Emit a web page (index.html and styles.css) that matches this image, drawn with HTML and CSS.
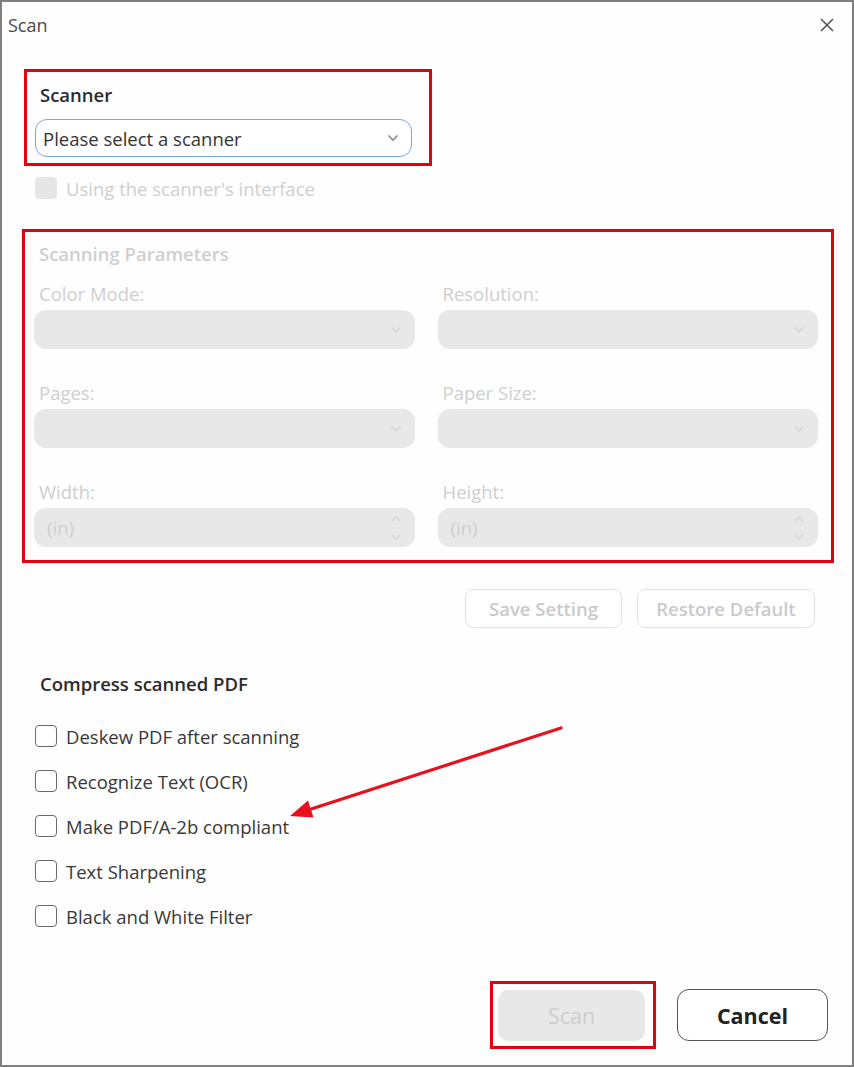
FILE: index.html
```html
<!DOCTYPE html>
<html>
<head>
<meta charset="utf-8">
<link rel="stylesheet" href="styles.css">
</head>
<body>
<div class="window">
  <div class="titlebar">
    <span class="title">Scan</span>
    <svg class="close" width="16" height="16" viewBox="0 0 16 16"><path d="M2 2L14 14M14 2L2 14" stroke="#555" stroke-width="1.6" fill="none"/></svg>
  </div>
  <div class="content">
    <div class="mark scanner-box">
      <div class="label-strong">Scanner</div>
      <div class="select active">
        <span>Please select a scanner</span>
        <svg class="chev" width="12" height="8" viewBox="0 0 12 8"><path d="M1.5 1.5L6 6L10.5 1.5" stroke="#888" stroke-width="1.6" fill="none"/></svg>
      </div>
    </div>
    <div class="check-row disabled">
      <span class="box filled"></span>
      <span>Using the scanner's interface</span>
    </div>
    <div class="mark params-box">
      <div class="section-title">Scanning Parameters</div>
      <div class="param-grid">
        <div class="field">
          <div class="field-label">Color Mode:</div>
          <div class="select off"><span></span><svg class="chev" width="12" height="8" viewBox="0 0 12 8"><path d="M1.5 1.5L6 6L10.5 1.5" stroke="#d4d4d4" stroke-width="1.4" fill="none"/></svg></div>
        </div>
        <div class="field">
          <div class="field-label">Resolution:</div>
          <div class="select off"><span></span><svg class="chev" width="12" height="8" viewBox="0 0 12 8"><path d="M1.5 1.5L6 6L10.5 1.5" stroke="#d4d4d4" stroke-width="1.4" fill="none"/></svg></div>
        </div>
        <div class="field">
          <div class="field-label">Pages:</div>
          <div class="select off"><span></span><svg class="chev" width="12" height="8" viewBox="0 0 12 8"><path d="M1.5 1.5L6 6L10.5 1.5" stroke="#d4d4d4" stroke-width="1.4" fill="none"/></svg></div>
        </div>
        <div class="field">
          <div class="field-label">Paper Size:</div>
          <div class="select off"><span></span><svg class="chev" width="12" height="8" viewBox="0 0 12 8"><path d="M1.5 1.5L6 6L10.5 1.5" stroke="#d4d4d4" stroke-width="1.4" fill="none"/></svg></div>
        </div>
        <div class="field">
          <div class="field-label">Width:</div>
          <div class="select off"><span class="unit">(in)</span><svg class="spin" width="12" height="30" viewBox="0 0 12 30"><path d="M2 8L6 4L10 8M2 22L6 26L10 22" stroke="#d4d4d4" stroke-width="1.4" fill="none"/></svg></div>
        </div>
        <div class="field">
          <div class="field-label">Height:</div>
          <div class="select off"><span class="unit">(in)</span><svg class="spin" width="12" height="30" viewBox="0 0 12 30"><path d="M2 8L6 4L10 8M2 22L6 26L10 22" stroke="#d4d4d4" stroke-width="1.4" fill="none"/></svg></div>
        </div>
      </div>
    </div>
    <div class="setting-buttons">
      <button class="ghost save">Save Setting</button>
      <button class="ghost restore">Restore Default</button>
    </div>
    <div class="label-strong compress">Compress scanned PDF</div>
    <div class="options">
      <div class="check-row"><span class="box"></span><span>Deskew PDF after scanning</span></div>
      <div class="check-row"><span class="box"></span><span>Recognize Text (OCR)</span></div>
      <div class="check-row"><span class="box"></span><span>Make PDF/A-2b compliant</span></div>
      <div class="check-row"><span class="box"></span><span>Text Sharpening</span></div>
      <div class="check-row"><span class="box"></span><span>Black and White Filter</span></div>
    </div>
    <div class="footer">
      <div class="mark scan-mark"><button class="scan-btn">Scan</button></div>
      <button class="cancel-btn">Cancel</button>
    </div>
  </div>
  <svg class="arrow" width="854" height="1067" viewBox="0 0 854 1067">
    <line x1="561" y1="728" x2="305" y2="811" stroke="#e8101c" stroke-width="3.2" stroke-linecap="round"/>
    <polygon points="290,816 313.5,817.5 308,800.5" fill="#e8101c"/>
  </svg>
</div>
</body>
</html>
```

FILE: styles.css
```css
* { box-sizing: border-box; }
html, body { margin: 0; padding: 0; background: #fff; }
body { font-family: "Open Sans", "Noto Sans", sans-serif; color: #333; }

.window {
  position: relative;
  width: 854px;
  height: 1067px;
  border: 2px solid #808080;
  background: #fefefe;
  overflow: hidden;
}

.titlebar {
  height: 46px;
  display: flex;
  align-items: center;
  justify-content: space-between;
  padding: 0 17px 0 6px;
}
.title { font-size: 18px; color: #4a4a4a; margin-top: -1px; }
.close { display: block; }

.content { padding: 21px 18px 0 20px; }

.mark { border: 3px solid #e5000f; }

.scanner-box {
  width: 408px;
  margin-left: 2px;
  padding: 11px 17px 6px 8px;
}
.label-strong {
  font-size: 18.5px;
  font-weight: 600;
  color: #2b2b2b;
  line-height: 24px;
  padding-left: 5px;
}
.select {
  display: flex;
  align-items: center;
  justify-content: space-between;
  border-radius: 12px;
  font-size: 18.5px;
}
.select.active {
  height: 38px;
  margin-top: 12px;
  border: 1.5px solid #78a6e6;
  padding: 0 12px 0 7px;
  color: #333;
  background: #fff;
}
.select.off {
  height: 39px;
  margin-top: 4px;
  background: #e8e8e8;
  padding: 0 13px 0 13px;
  color: #cfcfcf;
}
.chev { display: block; }
.spin { display: block; }

.check-row {
  display: flex;
  align-items: center;
  gap: 9px;
  height: 22px;
  font-size: 18.5px;
  color: #383838;
  margin-left: 13px;
}
.check-row.disabled { margin-top: 11px; color: #cfcfcf; }
.box {
  width: 22px;
  height: 22px;
  border: 1.6px solid #6a6a6a;
  border-radius: 4px;
  background: #fff;
  flex: none;
}
.box.filled { background: #e6e6e6; border-color: #e6e6e6; }

.params-box {
  width: 812px;
  margin-top: 30px;
  padding: 10px 13px 13px 9px;
}
.section-title {
  font-size: 18.5px;
  font-weight: 600;
  color: #cfcfcf;
  line-height: 24px;
  padding-left: 5px;
}
.param-grid {
  margin-top: 16px;
  display: grid;
  grid-template-columns: 1fr 1fr;
  column-gap: 23px;
  row-gap: 32px;
}
.field-label {
  font-size: 18.5px;
  line-height: 24px;
  color: #cfcfcf;
  padding-left: 5px;
}

.setting-buttons {
  width: 812px;
  margin-top: 26px;
  display: flex;
  justify-content: flex-end;
  gap: 15px;
  padding-right: 19px;
}
.ghost {
  height: 39px;
  border: 1.5px solid #e3e3e3;
  border-radius: 8px;
  background: #fff;
  font-family: inherit;
  font-size: 18.5px;
  font-weight: 600;
  color: #cacaca;
  padding: 0;
}
.save { width: 157px; }
.restore { width: 178px; }

.compress { margin-top: 44px; padding-left: 18px; }

.options {
  margin-top: 29px;
  display: flex;
  flex-direction: column;
  gap: 23px;
}

.footer {
  margin-top: 54px;
  display: flex;
  justify-content: flex-end;
  align-items: center;
  gap: 21px;
  padding-right: 6px;
}
.scan-mark {
  width: 166px;
  height: 68px;
  padding: 6px 8px 5px 5px;
}
.scan-btn {
  width: 147px;
  height: 51px;
  border: none;
  border-radius: 10px;
  background: #e8e8e8;
  font-family: inherit;
  font-size: 21.5px;
  font-weight: 500;
  color: #cdcdcd;
  padding: 0;
}
.cancel-btn {
  width: 151px;
  height: 52px;
  border: 1.6px solid #555;
  border-radius: 12px;
  background: #fff;
  font-family: inherit;
  font-size: 21.5px;
  font-weight: 700;
  color: #222;
  padding: 0;
}

.arrow {
  position: absolute;
  left: -2px;
  top: -2px;
  pointer-events: none;
}
```
